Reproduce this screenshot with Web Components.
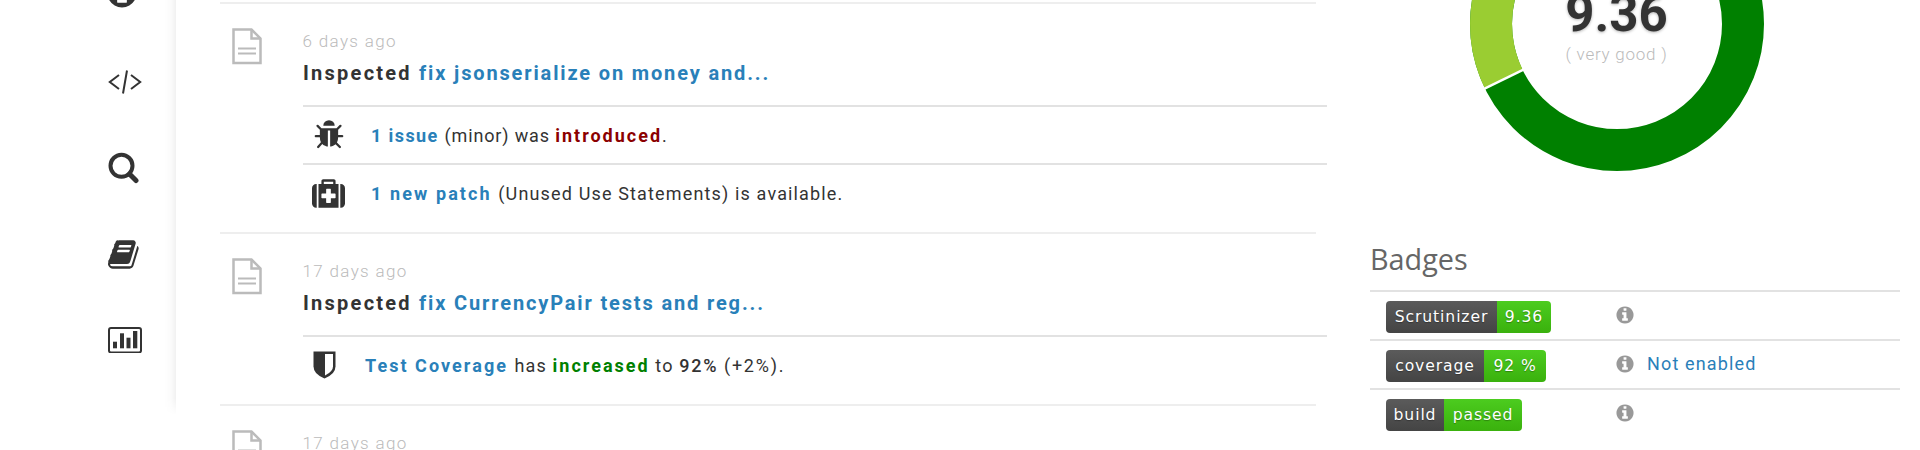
<!DOCTYPE html>
<html>
<head>
<meta charset="utf-8">
<title>Inspections</title>
<style>
html, body { margin: 0; height: 450px; overflow: hidden; background: #fff; }
body { font-family: Roboto, "Liberation Sans", sans-serif; color: #333; }
</style>
</head>
<body>
<app-shell>
  <side-nav slot="nav">
    <side-icon name="info" style="margin-bottom:3px;margin-left:-3px"></side-icon>
    <side-icon name="code"></side-icon>
    <side-icon name="search"></side-icon>
    <side-icon name="book"></side-icon>
    <side-icon name="chart"></side-icon>
  </side-nav>

  <div slot="main">
    <inspection-item when="6 days ago" label="fix jsonserialize on money and...">
      <inspection-note icon="bug" style="letter-spacing:.85px"><a-link style="letter-spacing:1.4px">1 issue</a-link> (minor) was <b style="color:#8b0000;letter-spacing:2px">introduced</b>.</inspection-note>
      <inspection-note icon="medkit"><a-link style="letter-spacing:2.1px">1 new patch</a-link> (Unused Use Statements) is available.</inspection-note>
    </inspection-item>
    <inspection-item when="17 days ago" label="fix CurrencyPair tests and reg...">
      <inspection-note icon="shield"><a-link style="letter-spacing:2.05px">Test Coverage</a-link> has <b style="color:#008000;letter-spacing:2px">increased</b> to <b style="font-weight:500;letter-spacing:1.8px">92%</b> <span style="letter-spacing:1.75px">(+2%).</span></inspection-note>
    </inspection-item>
    <inspection-item when="17 days ago"></inspection-item>
  </div>

  <div slot="side">
    <score-ring score="9.36" rating="( very good )"></score-ring>
    <badge-table>
      <badge-row name="Scrutinizer" value="9.36" left="111" right="54"></badge-row>
      <badge-row name="coverage" value="92 %" left="98" right="62"><a-link>Not enabled</a-link></badge-row>
      <badge-row name="build" value="passed" left="58" right="78"></badge-row>
    </badge-table>
  </div>
</app-shell>

<script>
const ICONS = {
  info: 'M1152 1376v-160q0-14-9-23t-23-9h-96v-512q0-14-9-23t-23-9h-320q-14 0-23 9t-9 23v160q0 14 9 23t23 9h96v320h-96q-14 0-23 9t-9 23v160q0 14 9 23t23 9h448q14 0 23-9t9-23zm-128-896v-160q0-14-9-23t-23-9h-192q-14 0-23 9t-9 23v160q0 14 9 23t23 9h192q14 0 23-9t9-23zm640 416q0 209-103 385.5t-279.5 279.5-385.5 103-385.5-103-279.5-279.5-103-385.5 103-385.5 279.5-279.5 385.5-103 385.5 103 279.5 279.5 103 385.5z',
  book: 'M1639 478q40 57 18 129l-275 906q-19 64-76.5 107.5t-122.5 43.5h-923q-77 0-148.5-53.5t-99.5-131.5q-24-67-2-127 0-4 3-27t4-37q1-8-3-21.5t-3-19.5q2-11 8-21t16.5-23.5 16.5-23.5q23-38 45-91.5t30-91.5q3-10 .5-30t-.5-28q3-11 17-28t17-23q21-36 42-92t25-90q1-9-2.5-32t.5-28q4-13 22-30.5t22-22.5q19-26 42.5-84.5t27.5-96.5q1-8-3-25.5t-2-26.5q2-8 9-18t18-23 17-21q8-12 16.5-30.5t15-35 16-36 19.5-32 26.5-23.5 36-11.5 47.5 5.5l-1 3q38-9 51-9h761q74 0 114 56t18 130l-274 906q-36 119-71.5 153.5t-128.5 34.5h-869q-27 0-38 15-11 16-1 43 24 70 144 70h923q29 0 56-15.5t35-41.5l300-987q7-22 5-57 38 15 59 43zm-1064 2q-4 13 2 22.5t20 9.5h608q13 0 25.5-9.5t16.5-22.5l21-64q4-13-2-22.5t-20-9.5h-608q-13 0-25.5 9.5t-16.5 22.5zm-83 256q-4 13 2 22.5t20 9.5h608q13 0 25.5-9.5t16.5-22.5l21-64q4-13-2-22.5t-20-9.5h-608q-13 0-25.5 9.5t-16.5 22.5z',
  bug: 'M1696 960q0 26-19 45t-45 19h-224q0 171-67 290l208 209q19 19 19 45t-19 45q-18 19-45 19t-45-19l-198-197q-5 5-15 13t-42 28.5-65 36.5-82 29-97 13v-896h-128v896q-51 0-101.5-13.5t-87-33-66-39-43.5-32.5l-15-14-183 207q-20 21-48 21-24 0-43-16-19-18-20.5-44.5t15.5-46.5l202-227q-58-114-58-274h-224q-26 0-45-19t-19-45 19-45 45-19h224v-294l-173-173q-19-19-19-45t19-45 45-19 45 19l173 173h844l173-173q19-19 45-19t45 19 19 45-19 45l-173 173v294h224q26 0 45 19t19 45zm-480-576h-640q0-133 93.5-226.5t226.5-93.5 226.5 93.5 93.5 226.5z',
  medkit: 'M1280 1120v-192q0-14-9-23t-23-9h-224v-224q0-14-9-23t-23-9h-192q-14 0-23 9t-9 23v224h-224q-14 0-23 9t-9 23v192q0 14 9 23t23 9h224v224q0 14 9 23t23 9h192q14 0 23-9t9-23v-224h224q14 0 23-9t9-23zm-640-736h512v-128h-512v128zm-384 0v1280h-32q-92 0-158-66t-66-158v-832q0-92 66-158t158-66h32zm1184 0v1280h-1088v-1280h160v-160q0-40 28-68t68-28h576q40 0 68 28t28 68v160h160zm352 224v832q0 92-66 158t-158 66h-32v-1280h32q92 0 158 66t66 158z'
};

function faIcon(name, size, color) {
  return `<svg width="${size}" height="${size}" viewBox="0 0 1792 1792" fill="${color}"><path d="${ICONS[name]}"/></svg>`;
}

const SIDE_SVG = {
  info: faIcon('info', 34, '#333'),
  code: `<svg width="34" height="24" viewBox="0 0 34 24" fill="none" stroke="#333" stroke-width="2"><path d="M11 5 1.8 12 11 19M23 5 32.2 12 23 19M19 .5 15 23.5"/></svg>`,
  search: `<svg width="32" height="32" viewBox="0 0 32 32" fill="none" stroke="#333"><circle cx="13.5" cy="13.8" r="11" stroke-width="4"/><path d="M21.5 22 28 28.5" stroke-width="5" stroke-linecap="round"/></svg>`,
  book: faIcon('book', 33, '#333'),
  chart: `<svg width="34" height="26" viewBox="0 0 34 26" fill="#333"><rect x="1" y="1" width="32" height="24.5" rx="2" fill="none" stroke="#333" stroke-width="2"/><rect x="5" y="14.7" width="4" height="6.6"/><rect x="12" y="6.3" width="4" height="15"/><rect x="18.5" y="10.7" width="4" height="10.6"/><rect x="25" y="4" width="4.3" height="17.3"/></svg>`
};

class AppShell extends HTMLElement {
  constructor() {
    super();
    this.attachShadow({ mode: "open" }).innerHTML = `
      <style>
      :host { display: grid; grid-template-columns: 176px 1140px 1fr; height: 450px; overflow: hidden; }
      .main { padding: 1.5px 0 0 43.5px; }
      .side { padding: 0 20px 0 54px; }
      </style>
      <slot name="nav"></slot>
      <div class="main"><slot name="main"></slot></div>
      <div class="side"><slot name="side"></slot></div>
    `;
  }
}

class SideNav extends HTMLElement {
  constructor() {
    super();
    this.attachShadow({ mode: "open" }).innerHTML = `
      <style>
      :host {
        display: flex; flex-direction: column; align-items: flex-start; gap: 56px;
        box-sizing: border-box; height: 437px; margin-top: -22px; padding-left: 108px;
        background: linear-gradient(to left, rgba(0,0,0,.055), rgba(0,0,0,.015) 5px, transparent 12px);
        -webkit-mask-image: linear-gradient(to bottom, #000 420px, transparent 437px);
      }
      </style>
      <slot></slot>
    `;
  }
}

class SideIcon extends HTMLElement {
  constructor() {
    super();
    const svg = SIDE_SVG[this.getAttribute("name")];
    this.attachShadow({ mode: "open" }).innerHTML = `
      <style>
      :host { display: flex; align-items: center; height: 30px; }
      svg { display: block; flex: none; }
      </style>
      ${svg}
    `;
  }
}

class ALink extends HTMLElement {
  constructor() {
    super();
    this.attachShadow({ mode: "open" }).innerHTML = `
      <style>:host { color: #2980b9; display: inline; }</style><slot></slot>
    `;
  }
}

class InspectionItem extends HTMLElement {
  constructor() {
    super();
    const label = this.getAttribute("label");
    this.attachShadow({ mode: "open" }).innerHTML = `
      <style>
      :host { display: flex; width: 1096.5px; box-sizing: border-box; border-top: 2px solid #eee; padding: 0 0 10.7px 12.5px; }
      .doc { flex: none; width: 30px; height: 37px; margin: 24.5px 41px 0 0; display: block; }
      .body { flex: 1; min-width: 0; margin-right: -11px; }
      .head { height: 101.5px; box-sizing: border-box; padding-top: 25px; }
      .when { font-size: 17px; line-height: 24px; letter-spacing: 1.35px; font-weight: 300; color: #bbb; margin-left: -.5px; }
      .title { font-size: 20px; line-height: 30px; margin-top: 5.5px; font-weight: 700; letter-spacing: 2.25px; white-space: nowrap; }
      .title span { color: #2980b9; letter-spacing: 1.85px; }
      </style>
      <svg class="doc" viewBox="0 0 30 37" fill="none" stroke="#bbb" stroke-width="2.5"><path d="M1.5 1.5H19.5L28.5 10.5V35H1.5Z"/><path d="M19.5 1.5V10.5H28.5"/><path d="M6 20.5H24M6 25.5H24" stroke-width="2"/></svg>
      <div class="body">
        <div class="head">
          <div class="when">${this.getAttribute("when")}</div>
          ${label ? `<div class="title">Inspected <span>${label}</span></div>` : ""}
        </div>
        <slot></slot>
      </div>
    `;
  }
}

class InspectionNote extends HTMLElement {
  constructor() {
    super();
    const kind = this.getAttribute("icon");
    const art = kind === "shield"
      ? `<svg width="23" height="28" viewBox="0 0 23 28"><path fill="#333" d="M.5 .5H22.5V15.5Q22.5 23 11.5 27.5 .5 23 .5 15.5Z"/><path fill="#fff" d="M12 3H20V15.5Q20 20.5 12 24.5Z"/></svg>`
      : faIcon(kind, kind === "bug" ? 32 : 33, "#333");
    const cell = {
      shield: "width:36px;padding-left:10px;justify-content:flex-start",
      bug: "width:52px;justify-content:center",
      medkit: "width:50px;padding-right:2px;justify-content:center"
    }[kind];
    this.attachShadow({ mode: "open" }).innerHTML = `
      <style>
      :host {
        display: flex; align-items: center; height: 58px; box-sizing: border-box;
        border-top: 2px solid #e2e2e2; font-size: 18px; font-weight: 400; letter-spacing: 1.15px;
      }
      .icon { display: flex; align-items: center; flex: none; margin-right: 16px; ${cell} }
      svg { display: block; flex: none; }
      .text { padding-top: 1px; }
      ::slotted(a-link), ::slotted(b) { font-weight: 700; }
      </style>
      <div class="icon">${art}</div>
      <div class="text"><slot></slot></div>
    `;
  }
}

class ScoreRing extends HTMLElement {
  constructor() {
    super();
    this.attachShadow({ mode: "open" }).innerHTML = `
      <style>
      :host { display: grid; justify-items: center; width: 493px; height: 294px; margin-top: -123px; }
      svg { grid-area: 1 / 1; display: block; }
      .label { grid-area: 1 / 1; align-self: start; margin-top: 107px; text-align: center; }
      .score { font-size: 51px; line-height: 60px; font-weight: 700; color: #333; text-shadow: 0 1px 3px rgba(0,0,0,.3); }
      .rating { font-size: 17px; line-height: 24px; margin-top: -2px; color: #bbb; font-weight: 300; letter-spacing: .75px; }
      </style>
      <svg width="294" height="294" viewBox="-147 -147 294 294">
        <circle r="126" fill="none" stroke="#008000" stroke-width="42"/>
        <path d="M-113.2 55.2A126 126 0 0 1 0 -126" fill="none" stroke="#9acd32" stroke-width="42"/>
        <path d="M-93 45.4 -135 65.8" stroke="#fff" stroke-width="2.4"/>
      </svg>
      <div class="label">
        <div class="score">${this.getAttribute("score")}</div>
        <div class="rating">${this.getAttribute("rating")}</div>
      </div>
    `;
  }
}

class BadgeTable extends HTMLElement {
  constructor() {
    super();
    this.attachShadow({ mode: "open" }).innerHTML = `
      <style>
      :host { display: block; width: 530px; margin-top: 64px; }
      h3 { margin: 0; font: 400 28.8px/47px "Open Sans", sans-serif; color: #666; height: 55px; }
      </style>
      <h3>Badges</h3>
      <slot></slot>
    `;
  }
}

class BadgeRow extends HTMLElement {
  constructor() {
    super();
    const left = this.getAttribute("left"), right = this.getAttribute("right");
    this.attachShadow({ mode: "open" }).innerHTML = `
      <style>
      :host {
        display: flex; align-items: flex-start; height: 48.9px; box-sizing: border-box;
        border-top: 2px solid #e2e2e2; padding: 9px 0 0 16px;
        font-size: 18px; letter-spacing: 1.15px;
      }
      .badge { display: flex; width: 229px; flex: none; }
      .badge span {
        display: block; height: 32px; text-align: center; color: #fff; box-sizing: border-box;
        font: 400 15.6px/32px "DejaVu Sans", sans-serif; letter-spacing: .9px; text-shadow: 0 1px 1px rgba(0,0,0,.3);
      }
      .name { background: linear-gradient(#5b5b5b, #444); border-radius: 4px 0 0 4px; }
      .value { background: linear-gradient(#4ccc1f, #3ab10d); border-radius: 0 4px 4px 0; }
      .info { flex: none; width: 20px; height: 20px; margin: 4px 12px 0 0; display: block; }
      .note { line-height: 28px; }
      </style>
      <div class="badge">
        <span class="name" style="width:${left}px">${this.getAttribute("name")}</span>
        <span class="value" style="width:${right}px">${this.getAttribute("value")}</span>
      </div>
      <svg class="info" viewBox="0 0 1792 1792" fill="#999"><path d="${ICONS.info}"/></svg>
      <div class="note"><slot></slot></div>
    `;
  }
}

customElements.define("app-shell", AppShell);
customElements.define("side-nav", SideNav);
customElements.define("side-icon", SideIcon);
customElements.define("a-link", ALink);
customElements.define("inspection-item", InspectionItem);
customElements.define("inspection-note", InspectionNote);
customElements.define("score-ring", ScoreRing);
customElements.define("badge-table", BadgeTable);
customElements.define("badge-row", BadgeRow);
</script>
</body>
</html>
